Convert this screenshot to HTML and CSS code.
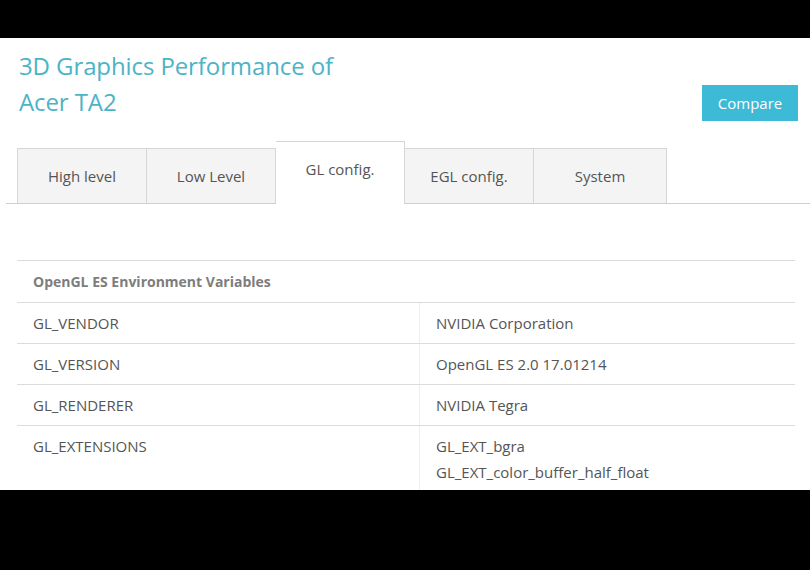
FILE: index.html
```html
<!DOCTYPE html>
<html lang="en">
<head>
  <meta charset="UTF-8">
  <title>3D Graphics Performance of Acer TA2</title>
  <meta name="viewport" content="width=device-width, initial-scale=1.0">
  <link rel="stylesheet" href="styles.css">
</head>
<body>

  <div class="page">
    <!-- Header -->
    <div class="header">
      <h1 class="title">3D Graphics Performance of<br>Acer TA2</h1>
      <button class="btn-compare">Compare</button>
    </div>

    <!-- Tabs -->
    <div class="tabs">
      <div class="tab">High level</div>
      <div class="tab">Low Level</div>
      <div class="tab active">GL config.</div>
      <div class="tab">EGL config.</div>
      <div class="tab tab-wide">System</div>
    </div>

    <!-- GL config table -->
    <table class="info-table">
      <tr>
        <th colspan="2">OpenGL ES Environment Variables</th>
      </tr>
      <tr>
        <td>GL_VENDOR</td>
        <td>NVIDIA Corporation</td>
      </tr>
      <tr>
        <td>GL_VERSION</td>
        <td>OpenGL ES 2.0 17.01214</td>
      </tr>
      <tr>
        <td>GL_RENDERER</td>
        <td>NVIDIA Tegra</td>
      </tr>
      <tr>
        <td>GL_EXTENSIONS</td>
        <td>GL_EXT_bgra<br>GL_EXT_color_buffer_half_float</td>
      </tr>
    </table>
  </div>

</body>
</html>
```

FILE: styles.css
```css
body {
  font-family: 'Open Sans', 'DejaVu Sans', sans-serif;
  margin: 0;
  padding: 0;
  background: #000;
}

.page {
  margin-top: 38px;
  height: 452px;
  overflow: hidden;
  background: #fff;
}

.header {
  display: flex;
  justify-content: space-between;
  align-items: flex-start;
  padding: 10px 12px 0 19px;
}

.title {
  margin: 0;
  font-size: 24px;
  font-weight: normal;
  line-height: 36px;
  color: #4db3c6;
  letter-spacing: -0.1px;
}

.btn-compare {
  margin-top: 37px;
  width: 96px;
  height: 36px;
  border: none;
  background: #3dbad6;
  color: #fff;
  font-family: inherit;
  font-size: 15px;
  cursor: pointer;
}

.tabs {
  display: flex;
  align-items: flex-end;
  margin: 19px 0 0 6px;
  padding-left: 11px;
  border-bottom: 1px solid #cfcfcf;
  height: 63px;
}

.tab {
  width: 128px;
  height: 54px;
  line-height: 54px;
  text-align: center;
  background: #f4f4f4;
  border: 1px solid #d6d6d6;
  border-bottom: none;
  border-left: none;
  font-size: 15px;
  color: #555;
}

.tab:first-child {
  border-left: 1px solid #d6d6d6;
}

.tab.active {
  height: 62px;
  line-height: 54px;
  background: #fff;
  margin-bottom: -1px;
}

.tab-wide {
  width: 132px;
}

.info-table {
  margin: 56px 0 0 17px;
  width: 778px;
  border-collapse: collapse;
  font-size: 15px;
  color: #555;
}

.info-table th {
  text-align: left;
  font-weight: bold;
  font-size: 14px;
  color: #7d7d7d;
  height: 41px;
  padding: 0 0 0 16px;
  border-top: 1px solid #dcdcdc;
  border-bottom: 1px solid #dcdcdc;
}

.info-table td {
  height: 40px;
  padding: 0 0 0 16px;
  border-bottom: 1px solid #dcdcdc;
  vertical-align: middle;
  line-height: 26px;
}

.info-table td:first-child {
  width: 386px;
  border-right: 1px solid #eee;
}

.info-table tr:last-child td {
  vertical-align: top;
  padding: 7px 0 20px 16px;
}
```
